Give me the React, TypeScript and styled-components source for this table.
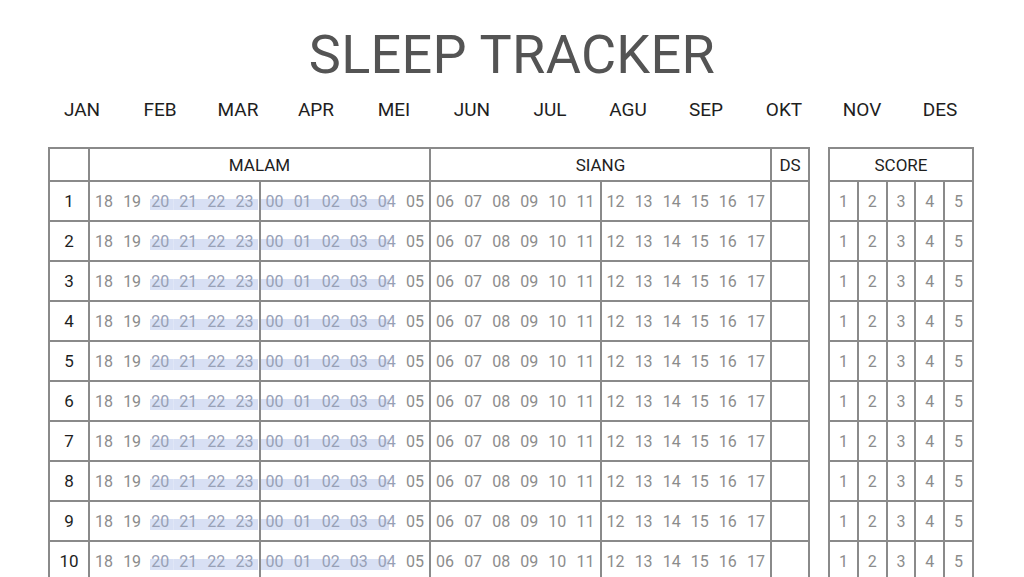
import React from "react";
import styled, { createGlobalStyle, css } from "styled-components";

const GlobalStyle = createGlobalStyle`
  html, body { margin: 0; padding: 0; background: #ffffff; }
  body { font-family: Roboto, "Liberation Sans", Arial, sans-serif; overflow: hidden; }
`;

const LINE = "#8a8a8a";

const Page = styled.div`
  width: 1024px;
  height: 577px;
  display: flex;
  flex-direction: column;
  align-items: center;
  overflow: hidden;
`;

const Title = styled.h1`
  margin: 25px 0 0;
  font-size: 54px;
  line-height: 60px;
  font-weight: 400;
  color: #545454;
  letter-spacing: 0.3px;
`;

const Months = styled.div`
  margin-top: 13px;
  display: grid;
  grid-template-columns: repeat(12, 78px);
  width: 936px;
  padding-right: 2px;
`;

const Month = styled.span`
  text-align: center;
  font-size: 19px;
  line-height: 24px;
  color: #1e1e1e;
`;

const Tables = styled.div`
  margin-top: 25px;
  display: flex;
  gap: 18px;
  align-items: flex-start;
  padding-right: 2px;
`;

const Table = styled.table<{ $w: number }>`
  width: ${(p) => p.$w}px;
  border-collapse: collapse;
  table-layout: fixed;
`;

const HeadCell = styled.th`
  height: 31px;
  padding: 0;
  border: 2px solid ${LINE};
  font-weight: 400;
  font-size: 17px;
  color: #1e1e1e;
  text-align: center;
  vertical-align: middle;
`;

const Cell = styled.td<{ $dark?: boolean }>`
  height: 38px;
  padding: 0;
  border: 2px solid ${LINE};
  font-size: ${(p) => (p.$dark ? "17px" : "16px")};
  color: ${(p) => (p.$dark ? "#1e1e1e" : "#8c8c8c")};
  text-align: center;
  vertical-align: middle;
`;

const HourRow = styled.div`
  display: flex;
  height: 38px;
`;

const Half = styled.div<{ $divider?: boolean }>`
  flex: 1;
  display: flex;
  ${(p) =>
    p.$divider &&
    css`
      border-right: 2px solid ${LINE};
    `}
`;

type Band = "none" | "start" | "full" | "end";

const Hour = styled.span<{ $band: Band }>`
  flex: 1;
  display: flex;
  align-items: center;
  justify-content: center;
  font-size: 16px;
  color: ${(p) => (p.$band === "none" ? "#8c8c8c" : "#97a0b6")};
  background-repeat: no-repeat;
  ${(p) =>
    p.$band !== "none" &&
    css`
      background-image: linear-gradient(#d8e0f4, #d8e0f4);
      background-size: ${p.$band === "start" ? "85%" : p.$band === "end" ? "58%" : "100%"} 11px;
      background-position: ${p.$band === "start" ? "right" : "left"} 17px;
    `}
`;

const months = ["JAN", "FEB", "MAR", "APR", "MEI", "JUN", "JUL", "AGU", "SEP", "OKT", "NOV", "DES"];
const malamA = ["18", "19", "20", "21", "22", "23"];
const malamB = ["00", "01", "02", "03", "04", "05"];
const siangA = ["06", "07", "08", "09", "10", "11"];
const siangB = ["12", "13", "14", "15", "16", "17"];

const bandOf = (h: string): Band => {
  if (h === "20") return "start";
  if (h === "04") return "end";
  if (["21", "22", "23", "00", "01", "02", "03"].includes(h)) return "full";
  return "none";
};

const Hours: React.FC<{ a: string[]; b: string[]; band?: boolean }> = ({ a, b, band }) => (
  <HourRow>
    <Half $divider>
      {a.map((h) => (
        <Hour key={h} $band={band ? bandOf(h) : "none"}>
          {h}
        </Hour>
      ))}
    </Half>
    <Half>
      {b.map((h) => (
        <Hour key={h} $band={band ? bandOf(h) : "none"}>
          {h}
        </Hour>
      ))}
    </Half>
  </HourRow>
);

const days = Array.from({ length: 10 }, (_, i) => i + 1);

export default function App() {
  return (
    <>
      <GlobalStyle />
      <Page>
        <Title>SLEEP TRACKER</Title>
        <Months>
          {months.map((m) => (
            <Month key={m}>{m}</Month>
          ))}
        </Months>
        <Tables>
          <Table $w={762}>
            <colgroup>
              <col style={{ width: 40 }} />
              <col style={{ width: 341 }} />
              <col style={{ width: 341 }} />
              <col style={{ width: 38 }} />
            </colgroup>
            <thead>
              <tr>
                <HeadCell />
                <HeadCell>MALAM</HeadCell>
                <HeadCell>SIANG</HeadCell>
                <HeadCell>DS</HeadCell>
              </tr>
            </thead>
            <tbody>
              {days.map((d) => (
                <tr key={d}>
                  <Cell $dark>{d}</Cell>
                  <Cell>
                    <Hours a={malamA} b={malamB} band />
                  </Cell>
                  <Cell>
                    <Hours a={siangA} b={siangB} />
                  </Cell>
                  <Cell />
                </tr>
              ))}
            </tbody>
          </Table>
          <Table $w={146}>
            <thead>
              <tr>
                <HeadCell colSpan={5}>SCORE</HeadCell>
              </tr>
            </thead>
            <tbody>
              {days.map((d) => (
                <tr key={d}>
                  {[1, 2, 3, 4, 5].map((s) => (
                    <Cell key={s}>{s}</Cell>
                  ))}
                </tr>
              ))}
            </tbody>
          </Table>
        </Tables>
      </Page>
    </>
  );
}
